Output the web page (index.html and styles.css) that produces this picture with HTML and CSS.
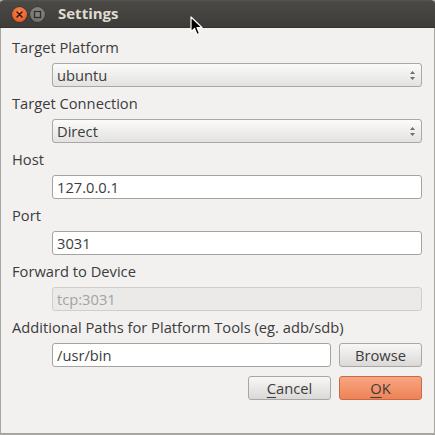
FILE: index.html
```html
<!DOCTYPE html>
<html>
<head>
<meta charset="utf-8">
<link rel="stylesheet" href="styles.css">
</head>
<body>
<div class="window">
  <div class="titlebar">
    <span class="wbtn close"><svg width="15" height="15" viewBox="0 0 15 15"><path d="M5 5 L10 10 M10 5 L5 10" stroke="#3a1a0c" stroke-width="1.6" stroke-linecap="round"/></svg></span>
    <span class="wbtn mini"><svg width="15" height="15" viewBox="0 0 15 15"><rect x="4.5" y="4.5" width="6" height="6" fill="none" stroke="#2e2d2a" stroke-width="1.3"/></svg></span>
    <span class="title">Settings</span>
  </div>
  <div class="content">
    <div class="label">Target Platform</div>
    <div class="field combo">ubuntu<span class="arrows"><svg width="7" height="11" viewBox="0 0 7 11"><path d="M3.5 1 L6 4 L1 4 Z M3.5 10 L6 7 L1 7 Z" fill="#6e6d6a"/></svg></span></div>
    <div class="label">Target Connection</div>
    <div class="field combo">Direct<span class="arrows"><svg width="7" height="11" viewBox="0 0 7 11"><path d="M3.5 1 L6 4 L1 4 Z M3.5 10 L6 7 L1 7 Z" fill="#6e6d6a"/></svg></span></div>
    <div class="label">Host</div>
    <div class="field entry">127.0.0.1</div>
    <div class="label">Port</div>
    <div class="field entry">3031</div>
    <div class="label">Forward to Device</div>
    <div class="field entry disabled">tcp:3031</div>
    <div class="label">Additional Paths for Platform Tools (eg. adb/sdb)</div>
    <div class="pathrow">
      <div class="field entry grow">/usr/bin</div>
      <div class="btn">Browse</div>
    </div>
    <div class="actions">
      <div class="btn"><u>C</u>ancel</div>
      <div class="btn ok"><u>O</u>K</div>
    </div>
  </div>
  <svg class="cursor" width="14" height="21" viewBox="0 0 14 21"><path d="M1 1 L1 16 L4.5 12.5 L7 18.5 L9.5 17.5 L7 11.5 L12 11.5 Z" fill="#000" stroke="#fff" stroke-width="1.2" stroke-linejoin="round"/></svg>
</div>
</body>
</html>
```
FILE: styles.css
```css
html, body {
  margin: 0;
  padding: 0;
  background: #f2f1f0;
}
.window {
  position: relative;
  width: 435px;
  height: 435px;
  box-sizing: border-box;
  background: #f2f1f0;
  border-left: 1px solid #a6a5a1;
  border-right: 1px solid #a6a5a1;
  border-bottom: 2px solid #a6a5a1;
  font-family: "Open Sans", "DejaVu Sans", sans-serif;
  font-size: 14.7px;
  color: #3c3c3c;
  display: flex;
  flex-direction: column;
}
.titlebar {
  height: 28px;
  margin: 0 -1px;
  box-sizing: border-box;
  background: linear-gradient(#55544f 0px, #4a4945 2px, #3d3c38 100%);
  border-bottom: 1px solid #33322e;
  border-radius: 4px 4px 0 0;
  display: flex;
  align-items: center;
  padding-left: 12px;
  padding-top: 2px;
}
.wbtn {
  width: 15px;
  height: 15px;
  border-radius: 50%;
  display: flex;
  margin-right: 3px;
}
.close {
  background: radial-gradient(circle at 50% 35%, #f7834e, #e0531f);
  box-shadow: 0 0 0 0.5px #2a2926;
}
.mini {
  background: radial-gradient(circle at 50% 35%, #8a8984, #6a6964);
  box-shadow: 0 0 0 0.5px #2a2926;
}
.title {
  margin-left: 10px;
  margin-bottom: 4px;
  font-weight: 700;
  font-size: 15px;
  color: #dfdbd2;
  line-height: 20px;
}
.content {
  padding: 9px 12px 0 11px;
  display: flex;
  flex-direction: column;
}
.label {
  height: 20px;
  line-height: 20px;
  margin-bottom: 6px;
  white-space: nowrap;
}
.field {
  height: 24px;
  box-sizing: border-box;
  margin-left: 40px;
  margin-bottom: 6px;
  border: 1px solid #a9a8a4;
  border-radius: 3px;
  padding-left: 4px;
  line-height: 22px;
  display: flex;
  align-items: center;
}
.combo {
  background: linear-gradient(#fbfbfa, #e3e2e0);
  justify-content: space-between;
  padding-right: 5px;
}
.arrows {
  display: flex;
  align-items: center;
}
.entry {
  background: #ffffff;
  border-color: #a5a4a0;
}
.disabled {
  background: #ebeae9;
  border-color: #cfcecb;
  color: #a3a3a1;
}
.pathrow {
  display: flex;
  gap: 8px;
  margin-left: 40px;
  margin-bottom: 9px;
}
.pathrow .field {
  margin: 0;
  flex: 1;
}
.btn {
  width: 83px;
  height: 24px;
  box-sizing: border-box;
  border: 1px solid #a8a7a3;
  border-radius: 3px;
  background: linear-gradient(#f7f7f6, #dad9d7);
  display: flex;
  align-items: center;
  justify-content: center;
  line-height: 22px;
}
.btn u {
  text-decoration-thickness: 1px;
  text-underline-offset: 3px;
}
.actions {
  display: flex;
  justify-content: flex-end;
  gap: 8px;
}
.ok {
  background: linear-gradient(#f9a582, #ee8356);
  border-color: #c66a47;
}
.cursor {
  position: absolute;
  left: 189px;
  top: 16px;
}
```
